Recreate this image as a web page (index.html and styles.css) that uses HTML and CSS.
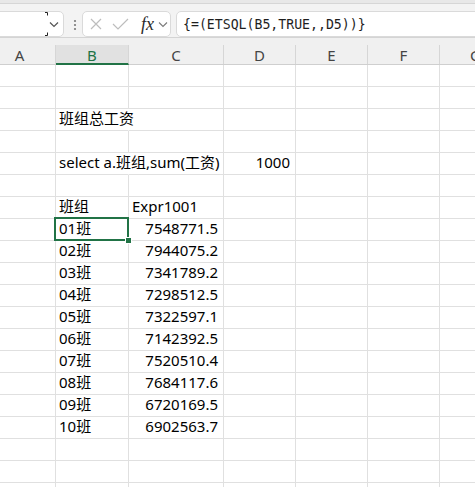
FILE: index.html
```html
<!DOCTYPE html>
<html lang="zh">
<head>
<meta charset="utf-8">
<link rel="stylesheet" href="styles.css">
</head>
<body>
<div class="topstrip"></div>
<div class="fbar">
  <div class="namebox">
    <svg width="67" height="24" viewBox="0 0 67 24">
      <path d="M49 0.5h2.5v3M49 23.5h2.5v-3" fill="none" stroke="#222" stroke-width="1"/>
      <path d="M54 10.5l4 4 4-4" fill="none" stroke="#555" stroke-width="1.2"/>
    </svg>
  </div>
  <svg class="dots" width="18" height="26" viewBox="0 0 18 26">
    <circle cx="11" cy="10" r="1.1" fill="#7a7a7a"/>
    <circle cx="11" cy="14" r="1.1" fill="#7a7a7a"/>
    <circle cx="11" cy="18" r="1.1" fill="#7a7a7a"/>
  </svg>
  <div class="fxbox">
    <svg width="52" height="24" viewBox="0 0 52 24">
      <path d="M8 7l10 10M18 7L8 17" fill="none" stroke="#bdbdbd" stroke-width="1.2"/>
      <path d="M30 12l5 5 10-10" fill="none" stroke="#bdbdbd" stroke-width="1.2"/>
    </svg>
    <span class="fx">fx</span>
    <svg width="16" height="24" viewBox="0 0 16 24">
      <path d="M5 10.5l4 4 4-4" fill="none" stroke="#7a7a7a" stroke-width="1.1"/>
    </svg>
  </div>
  <div class="formula">{=(ETSQL(B5,TRUE,,D5))}</div>
</div>

<div class="colhead">
  <div class="h a">A</div>
  <div class="h sel">B</div>
  <div class="h">C</div>
  <div class="h">D</div>
  <div class="h">E</div>
  <div class="h">F</div>
  <div class="h">G</div>
</div>

<div class="sheet">
  <div class="row"><div class="c"></div><div class="c"></div><div class="c"></div><div class="c"></div><div class="c"></div><div class="c"></div><div class="c"></div></div>
  <div class="row"><div class="c"></div><div class="c"></div><div class="c"></div><div class="c"></div><div class="c"></div><div class="c"></div><div class="c"></div></div>
  <div class="row"><div class="c"></div><div class="c sp">班组总工资</div><div class="c"></div><div class="c"></div><div class="c"></div><div class="c"></div><div class="c"></div></div>
  <div class="row"><div class="c"></div><div class="c"></div><div class="c"></div><div class="c"></div><div class="c"></div><div class="c"></div><div class="c"></div></div>
  <div class="row"><div class="c"></div><div class="c sp">select a.班组,sum(工资)</div><div class="c"></div><div class="c num">1000</div><div class="c"></div><div class="c"></div><div class="c"></div></div>
  <div class="row"><div class="c"></div><div class="c"></div><div class="c"></div><div class="c"></div><div class="c"></div><div class="c"></div><div class="c"></div></div>
  <div class="row"><div class="c"></div><div class="c">班组</div><div class="c">Expr1001</div><div class="c"></div><div class="c"></div><div class="c"></div><div class="c"></div></div>
  <div class="row"><div class="c"></div><div class="c active">01班</div><div class="c num">7548771.5</div><div class="c"></div><div class="c"></div><div class="c"></div><div class="c"></div></div>
  <div class="row"><div class="c"></div><div class="c">02班</div><div class="c num">7944075.2</div><div class="c"></div><div class="c"></div><div class="c"></div><div class="c"></div></div>
  <div class="row"><div class="c"></div><div class="c">03班</div><div class="c num">7341789.2</div><div class="c"></div><div class="c"></div><div class="c"></div><div class="c"></div></div>
  <div class="row"><div class="c"></div><div class="c">04班</div><div class="c num">7298512.5</div><div class="c"></div><div class="c"></div><div class="c"></div><div class="c"></div></div>
  <div class="row"><div class="c"></div><div class="c">05班</div><div class="c num">7322597.1</div><div class="c"></div><div class="c"></div><div class="c"></div><div class="c"></div></div>
  <div class="row"><div class="c"></div><div class="c">06班</div><div class="c num">7142392.5</div><div class="c"></div><div class="c"></div><div class="c"></div><div class="c"></div></div>
  <div class="row"><div class="c"></div><div class="c">07班</div><div class="c num">7520510.4</div><div class="c"></div><div class="c"></div><div class="c"></div><div class="c"></div></div>
  <div class="row"><div class="c"></div><div class="c">08班</div><div class="c num">7684117.6</div><div class="c"></div><div class="c"></div><div class="c"></div><div class="c"></div></div>
  <div class="row"><div class="c"></div><div class="c">09班</div><div class="c num">6720169.5</div><div class="c"></div><div class="c"></div><div class="c"></div><div class="c"></div></div>
  <div class="row"><div class="c"></div><div class="c">10班</div><div class="c num">6902563.7</div><div class="c"></div><div class="c"></div><div class="c"></div><div class="c"></div></div>
  <div class="row"><div class="c"></div><div class="c"></div><div class="c"></div><div class="c"></div><div class="c"></div><div class="c"></div><div class="c"></div></div>
  <div class="row"><div class="c"></div><div class="c"></div><div class="c"></div><div class="c"></div><div class="c"></div><div class="c"></div><div class="c"></div></div>
  <div class="row"><div class="c"></div><div class="c"></div><div class="c"></div><div class="c"></div><div class="c"></div><div class="c"></div><div class="c"></div></div>
</div>
</body>
</html>
```
FILE: styles.css
```css
html, body {
  margin: 0;
  padding: 0;
  width: 475px;
  height: 487px;
  overflow: hidden;
  background: #fff;
}

body {
  font-family: "Noto Sans", "Noto Sans CJK SC", sans-serif;
  color: #000;
}

.topstrip {
  height: 3px;
  background: #e8e8e8;
  border-bottom: 1px solid #d6d6d6;
}

.fbar {
  height: 34px;
  box-sizing: border-box;
  padding-top: 7px;
  background: #f3f3f3;
  border-bottom: 1px solid #d4d4d4;
  display: flex;
  align-items: flex-start;
  overflow: hidden;
}

.namebox {
  margin-left: -5px;
  width: 69px;
  height: 26px;
  box-sizing: border-box;
  background: #fff;
  border: 1px solid #dadada;
  border-radius: 5px;
  flex: none;
}

.namebox svg,
.fxbox svg,
.dots {
  display: block;
  flex: none;
}

.fxbox {
  width: 89px;
  height: 26px;
  box-sizing: border-box;
  background: #fff;
  border: 1px solid #dadada;
  border-radius: 5px;
  display: flex;
  flex: none;
}

.fx {
  margin-left: 6px;
  width: 13px;
  font-family: "Liberation Serif", serif;
  font-style: italic;
  font-size: 18px;
  line-height: 24px;
  color: #2a2a2a;
  flex: none;
}

.formula {
  margin-left: 5px;
  margin-right: -8px;
  flex: 1;
  height: 26px;
  box-sizing: border-box;
  background: #fff;
  border: 1px solid #dadada;
  border-radius: 5px;
  padding: 1px 0 0 6px;
  font-family: "DejaVu Sans Mono", monospace;
  font-size: 13.2px;
  line-height: 24px;
  color: #1e1e1e;
  white-space: nowrap;
}

.colhead {
  height: 27px;
  box-sizing: border-box;
  padding-top: 7px;
  background: #f0f0f0;
  border-bottom: 1px solid #cfcfcf;
  display: grid;
  grid-template-columns: 56px 73px 95px 72px 72px 72px 72px;
  grid-template-rows: 19px;
  align-items: start;
}

.h {
  height: 19px;
  box-sizing: border-box;
  border-right: 1px solid #d6d6d6;
  text-align: center;
  font-family: "Noto Sans", sans-serif;
  font-size: 15px;
  line-height: 19px;
  padding-top: 1px;
  color: #444;
}

.h.a {
  padding-right: 16px;
}

.h.sel {
  height: 20px;
  margin-bottom: -1px;
  background: #e1e1e1;
  border-bottom: 2px solid #217346;
  color: #217346;
  position: relative;
  z-index: 1;
}

.sheet {
  display: flex;
  flex-direction: column;
}

.row {
  display: grid;
  grid-template-columns: 56px 73px 95px 72px 72px 72px 72px;
  height: 22px;
  flex: none;
}

.c {
  box-sizing: border-box;
  height: 22px;
  border-right: 1px solid #e0e0e0;
  border-bottom: 1px solid #e0e0e0;
  padding: 0 3px;
  font-size: 15px;
  line-height: 19px;
  white-space: nowrap;
  overflow: visible;
}

.c.sp {
  border-right-color: transparent;
}

.c.num {
  text-align: right;
  padding-right: 5px;
}

.c.active {
  position: relative;
  z-index: 2;
}

.c.active::after {
  content: "";
  position: absolute;
  top: -2px;
  left: -2px;
  right: -1px;
  bottom: -1px;
  border: 2px solid #217346;
}

.c.active::before {
  content: "";
  position: absolute;
  right: -4px;
  bottom: -4px;
  width: 5px;
  height: 5px;
  background: #217346;
  border: 1px solid #fff;
  z-index: 1;
}
```
